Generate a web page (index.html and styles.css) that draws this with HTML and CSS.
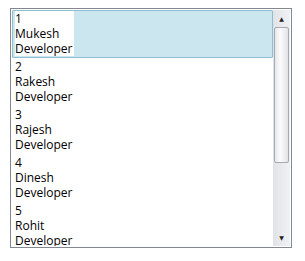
FILE: index.html
```html
<!DOCTYPE html>
<html lang="en">
<head>
    <meta charset="UTF-8">
    <title>Employees</title>
    <link rel="stylesheet" href="styles.css">
</head>
<body>
    <div class="listbox">
        <div class="items">
            <div class="item selected">
                <div class="card">1<br>Mukesh<br>Developer</div>
            </div>
            <div class="item">
                <div class="card">2<br>Rakesh<br>Developer</div>
            </div>
            <div class="item">
                <div class="card">3<br>Rajesh<br>Developer</div>
            </div>
            <div class="item">
                <div class="card">4<br>Dinesh<br>Developer</div>
            </div>
            <div class="item">
                <div class="card">5<br>Rohit<br>Developer</div>
            </div>
        </div>
        <div class="scrollbar">
            <div class="arrow up">&#9650;</div>
            <div class="track">
                <div class="thumb"></div>
            </div>
            <div class="arrow down">&#9660;</div>
        </div>
    </div>
</body>
</html>
```

FILE: styles.css
```css
body {
    margin: 0;
    padding: 8px 0 0 10px;
    background-color: #fff;
    font-family: "Open Sans", "DejaVu Sans", sans-serif;
    font-size: 12px;
    color: #000;
}
.listbox {
    width: 278px;
    height: 236px;
    border: 1px solid #828790;
    display: flex;
    padding: 1px;
    overflow: hidden;
}
.items {
    flex: 1;
    overflow: hidden;
}
.item {
    padding: 0 2px 1px 2px;
    border: 1px solid transparent;
    line-height: 15px;
}
.item.selected {
    background-color: #cbe6ef;
    border-color: #8ebfd0;
    border-radius: 1px;
}
.card {
    display: inline-block;
    background-color: #fff;
    padding-right: 2px;
}
.scrollbar {
    width: 17px;
    display: flex;
    flex-direction: column;
    background: linear-gradient(to right, #e2e3e7, #f0f1f4);
}
.arrow {
    height: 17px;
    font-size: 6px;
    color: #222;
    display: flex;
    align-items: center;
    justify-content: center;
}
.track {
    flex: 1;
}
.thumb {
    height: 134px;
    margin: 0 1px;
    border: 1px solid #a6a9af;
    border-radius: 2px;
    background: linear-gradient(to right, #e6e7ea, #fcfcfd 40%, #e2e3e6);
}
```
